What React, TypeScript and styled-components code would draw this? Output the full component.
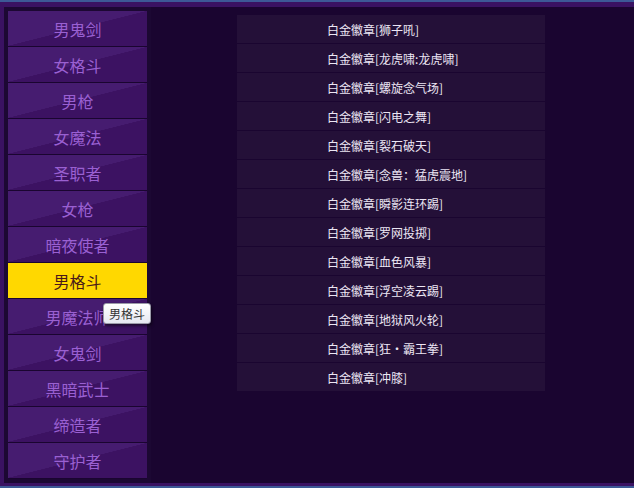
import React from 'react';
import styled, { createGlobalStyle } from 'styled-components';

const GlobalStyle = createGlobalStyle`
  html, body {
    margin: 0;
    padding: 0;
    height: 100%;
    background: #1a0530;
  }
  #root { height: 100%; }
`;

const Page = styled.div`
  height: 100vh;
  display: flex;
  flex-direction: column;
  background: #1a0530;
  font-family: "Noto Sans CJK SC", "Noto Sans", sans-serif;
  border-top: 2px solid #3d5996;
  border-bottom: 2px solid #3d5996;
  box-sizing: border-box;
`;

const Band = styled.div`
  height: ${p => p.$h}px;
  background: #3a1262;
  flex: none;
`;

const Body = styled.div`
  flex: 1;
  display: flex;
  min-height: 0;
`;

const Sidebar = styled.div`
  width: 139px;
  flex: none;
  border-left: 4px solid #3a1262;
  padding: 4px 4px 0 4px;
  background: #1c0833;
  display: flex;
  flex-direction: column;
`;

const Tab = styled.div`
  position: relative;
  height: 35px;
  border-bottom: 1px solid #1a0530;
  display: flex;
  align-items: center;
  justify-content: center;
  font-size: 16px;
  color: ${p => (p.$active ? '#4a1a1a' : '#9a60d2')};
  background: ${p =>
    p.$active
      ? '#ffd800'
      : 'linear-gradient(to top left, #3c1262 50%, #461c70 50.5%)'};
  cursor: pointer;
`;

const Tip = styled.span`
  position: absolute;
  left: 95px;
  top: 40px;
  padding: 2px 5px;
  font-size: 12px;
  line-height: 15px;
  color: #333;
  background: linear-gradient(#ffffff, #e6e8f2);
  border: 1px solid #9a9aa8;
  border-radius: 3px;
  box-shadow: 1px 2px 3px rgba(0, 0, 0, 0.5);
  white-space: nowrap;
  z-index: 2;
`;

const Main = styled.div`
  flex: 1;
  padding: 8px 0 0 86px;
`;

const Table = styled.div`
  width: 308px;
  display: flex;
  flex-direction: column;
`;

const Row = styled.div`
  height: 28px;
  border-bottom: 1px solid #1a0530;
  background: #241038;
  display: flex;
  align-items: center;
  padding-left: 90px;
  font-size: 12px;
  color: #ece6f4;
`;

const classes = ['男鬼剑', '女格斗', '男枪', '女魔法', '圣职者', '女枪', '暗夜使者', '男格斗', '男魔法师', '女鬼剑', '黑暗武士', '缔造者', '守护者'];

const badges = ['狮子吼', '龙虎啸:龙虎啸', '螺旋念气场', '闪电之舞', '裂石破天', '念兽：猛虎震地', '瞬影连环踢', '罗网投掷', '血色风暴', '浮空凌云踢', '地狱风火轮', '狂·霸王拳', '冲膝'];

export default function App() {
  const active = 7;
  return (
    <>
      <GlobalStyle />
      <Page>
        <Band $h={5} />
        <Body>
          <Sidebar>
            {classes.map((c, i) => (
              <Tab key={c} $active={i === active}>
                {c}
                {i === active && <Tip>{c}</Tip>}
              </Tab>
            ))}
          </Sidebar>
          <Main>
            <Table>
              {badges.map(b => (
                <Row key={b}>白金徽章[{b}]</Row>
              ))}
            </Table>
          </Main>
        </Body>
        <Band $h={3} />
      </Page>
    </>
  );
}
